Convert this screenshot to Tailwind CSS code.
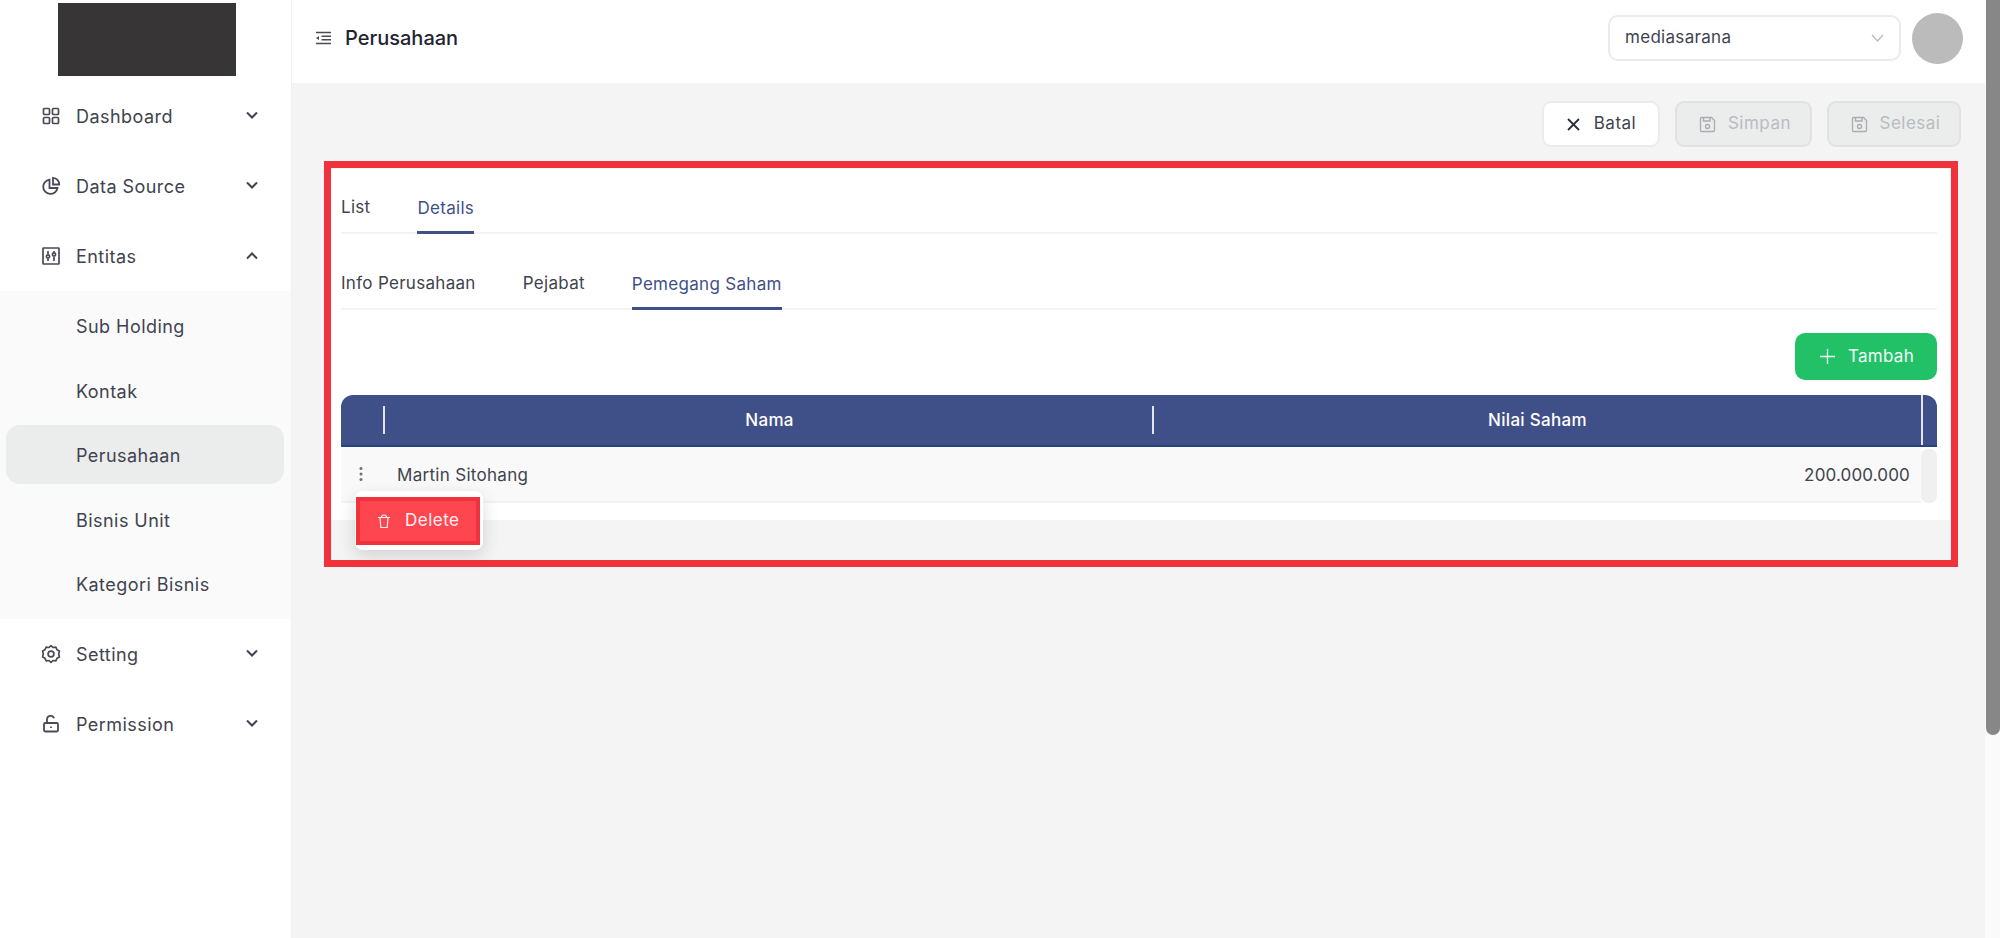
<!DOCTYPE html>
<html lang="id">
<head>
  <meta charset="UTF-8">
  <meta name="viewport" content="width=device-width, initial-scale=1.0">
  <title>Perusahaan</title>
  <script src="https://cdn.jsdelivr.net/npm/@tailwindcss/browser@4"></script>
</head>
<body class="h-[938px] overflow-hidden bg-[#f4f4f4] font-['Inter',sans-serif] text-[#40434e] flex">

  <!-- Sidebar -->
  <aside class="w-[292px] shrink-0 h-full bg-white border-r border-[#f0f0f0]">
    <div class="h-[81px] pt-[3px] pl-[58px]">
      <div class="w-[178px] h-[73px] bg-[#383536]"></div>
    </div>
    <nav class="text-[18px] tracking-[0.45px]">
      <a class="h-[70px] flex items-center pl-[41px] pr-[32px]">
        <svg class="w-[20px] h-[20px] mr-[15px] text-[#4a4a55]" viewBox="0 0 20 20" fill="none" stroke="currentColor" stroke-width="1.7"><rect x="2.500" y="2.500" width="6" height="6" rx="1"/><rect x="11.500" y="2.500" width="6" height="6" rx="1"/><rect x="2.500" y="11.500" width="6" height="6" rx="1"/><rect x="11.500" y="11.500" width="6" height="6" rx="1"/></svg>
        <span class="flex-1">Dashboard</span>
        <svg class="w-[14px] h-[14px] -mt-[3px] text-[#3f4450]" viewBox="0 0 14 14" fill="none" stroke="currentColor" stroke-width="2"><path d="M2 4.500l5 5 5-5"/></svg>
      </a>
      <a class="h-[70px] flex items-center pl-[41px] pr-[32px]">
        <svg class="w-[20px] h-[20px] mr-[15px] text-[#4a4a55]" viewBox="0 0 20 20" fill="none" stroke="currentColor" stroke-width="1.8"><path d="M8.500 3.600a7.200 7.200 0 1 0 8 8.400H8.500z"/><path d="M12 1.800a6.500 6.500 0 0 1 6.200 6.700H12z"/></svg>
        <span class="flex-1">Data Source</span>
        <svg class="w-[14px] h-[14px] -mt-[3px] text-[#3f4450]" viewBox="0 0 14 14" fill="none" stroke="currentColor" stroke-width="2"><path d="M2 4.500l5 5 5-5"/></svg>
      </a>
      <a class="h-[70px] flex items-center pl-[41px] pr-[32px]">
        <svg class="w-[20px] h-[20px] mr-[15px] text-[#4a4a55]" viewBox="0 0 20 20" fill="none" stroke="currentColor" stroke-width="1.7"><rect x="2" y="2" width="16" height="16" rx="0.500"/><path d="M7 5v3M7 13v2M13 5v1M13 11v4"/><circle cx="7" cy="10.500" r="1.600"/><circle cx="13" cy="8.500" r="1.600"/></svg>
        <span class="flex-1">Entitas</span>
        <svg class="w-[14px] h-[14px] text-[#3f4450]" viewBox="0 0 14 14" fill="none" stroke="currentColor" stroke-width="2"><path d="M2 9.500l5-5 5 5"/></svg>
      </a>

      <div class="h-[328px] bg-[#fafafa] pt-[5px] pr-[7px] pl-[6px] flex flex-col gap-[5.5px]">
        <a class="h-[59px] shrink-0 flex items-center pl-[70px] pt-[2px] rounded-[14px]">Sub Holding</a>
        <a class="h-[59px] shrink-0 flex items-center pl-[70px] pt-[2px] rounded-[14px]">Kontak</a>
        <a class="h-[59px] shrink-0 flex items-center pl-[70px] pt-[2px] rounded-[14px] bg-[#ebecec]">Perusahaan</a>
        <a class="h-[59px] shrink-0 flex items-center pl-[70px] pt-[2px] rounded-[14px]">Bisnis Unit</a>
        <a class="h-[59px] shrink-0 flex items-center pl-[70px] pt-[2px] rounded-[14px]">Kategori Bisnis</a>
      </div>

      <a class="h-[70px] flex items-center pl-[41px] pr-[32px]">
        <svg class="w-[20px] h-[20px] mr-[15px] text-[#4a4a55]" viewBox="0 0 20 20" fill="none" stroke="currentColor" stroke-width="1.700" stroke-linejoin="round"><path d="M10 1.600l2 1.900 2.800-.4 1.200 2.600 2.400 1.400-.7 2.900.7 2.900-2.400 1.400-1.200 2.600-2.800-.4-2 1.900-2-1.900-2.800.4L4 14.300 1.600 12.900l.7-2.900-.7-2.900L4 5.700l1.200-2.600 2.800.4z"/><circle cx="10" cy="10" r="2.900"/></svg>
        <span class="flex-1">Setting</span>
        <svg class="w-[14px] h-[14px] -mt-[3px] text-[#3f4450]" viewBox="0 0 14 14" fill="none" stroke="currentColor" stroke-width="2"><path d="M2 4.500l5 5 5-5"/></svg>
      </a>
      <a class="h-[70px] flex items-center pl-[41px] pr-[32px]">
        <svg class="w-[20px] h-[20px] mr-[15px] text-[#4a4a55]" viewBox="0 0 20 20" fill="none" stroke="currentColor" stroke-width="1.800"><rect x="3" y="9" width="14" height="8.500" rx="1.200"/><path d="M6 9V5.500a3.600 3.600 0 0 1 7-1.200"/><path d="M10 12.500v1.500"/></svg>
        <span class="flex-1">Permission</span>
        <svg class="w-[14px] h-[14px] -mt-[3px] text-[#3f4450]" viewBox="0 0 14 14" fill="none" stroke="currentColor" stroke-width="2"><path d="M2 4.500l5 5 5-5"/></svg>
      </a>
    </nav>
  </aside>

  <!-- Main -->
  <div class="flex-1 min-w-0 flex flex-col relative">
    <header class="h-[83px] shrink-0 bg-white flex items-center pl-[23px] pr-[22px] pb-[7px]">
      <svg class="w-[17px] h-[14px] mr-[13px] text-[#4a4a55]" viewBox="0 0 17 14" fill="none" stroke="currentColor" stroke-width="1.400"><path d="M1 1.500h15M6.500 5.200H16M6.500 8.800H16M1 12.500h15"/><path d="M1 7l3-2v4z" fill="currentColor" stroke="none"/></svg>
      <h1 class="text-[20px] font-medium text-[#1f2430] flex-1">Perusahaan</h1>
      <div class="w-[293px] h-[46px] border-2 border-[#ebebeb] rounded-[10px] flex items-center pl-[15px] pr-[15px] text-[17px] tracking-[0.3px] mr-[11px]">
        <span class="flex-1">mediasarana</span>
        <svg class="w-[13px] h-[8px] text-[#b8b8b8]" viewBox="0 0 13 8" fill="none" stroke="currentColor" stroke-width="1.200"><path d="M1 1l5.500 6L12 1"/></svg>
      </div>
      <div class="w-[51px] h-[51px] rounded-full bg-[#bbbbbb]"></div>
    </header>

    <div class="flex justify-end gap-[15px] pt-[18px] pr-[24px] h-[86px] shrink-0 text-[17px] tracking-[0.5px]">
      <button class="w-[118px] h-[46px] bg-white border-2 border-[#ebebeb] rounded-[9px] flex items-center justify-center gap-[14px] pl-[1px]">
        <svg class="w-[13px] h-[13px] text-[#2c2f38]" viewBox="0 0 13 13" fill="none" stroke="currentColor" stroke-width="1.800"><path d="M1 1l11 11M12 1L1 12"/></svg>
        Batal
      </button>
      <button class="w-[137px] h-[46px] bg-[#ebecec] border-2 border-[#e2e2e2] rounded-[9px] flex items-center justify-center gap-[12px] pl-[3px] text-[#b9bcc0]">
        <svg class="w-[17px] h-[17px] text-[#a9abae]" viewBox="0 0 17 17" fill="none" stroke="currentColor" stroke-width="1.300"><path d="M1.500 2.500a1 1 0 0 1 1-1h10l3 3v10a1 1 0 0 1-1 1h-12a1 1 0 0 1-1-1z"/><path d="M4.500 1.500v3.500h6.500V1.500"/><circle cx="8.500" cy="10.500" r="2"/></svg>
        Simpan
      </button>
      <button class="w-[134px] h-[46px] bg-[#ebecec] border-2 border-[#e2e2e2] rounded-[9px] flex items-center justify-center gap-[12px] pl-[3px] text-[#b9bcc0]">
        <svg class="w-[17px] h-[17px] text-[#a9abae]" viewBox="0 0 17 17" fill="none" stroke="currentColor" stroke-width="1.300"><path d="M1.500 2.500a1 1 0 0 1 1-1h10l3 3v10a1 1 0 0 1-1 1h-12a1 1 0 0 1-1-1z"/><path d="M4.500 1.500v3.500h6.500V1.500"/><circle cx="8.500" cy="10.500" r="2"/></svg>
        Selesai
      </button>
    </div>

    <!-- Card -->
    <section class="ml-[39px] mr-[35px] bg-white pl-[10px] pr-[13px] pb-[17px] relative text-[17px] tracking-[0.3px]">
      <div class="h-[65px] border-b-2 border-[#f3f3f3] flex items-end gap-[47px] leading-[20px]">
        <a class="pb-[15px]">List</a>
        <a class="pb-[13px] -mb-[2px] border-b-[3px] border-[#3f5089] text-[#3f5089]">Details</a>
      </div>
      <div class="h-[76px] border-b-2 border-[#f3f3f3] flex items-end gap-[47px] leading-[20px]">
        <a class="pb-[15px]">Info Perusahaan</a>
        <a class="pb-[15px]">Pejabat</a>
        <a class="pb-[13px] -mb-[2px] border-b-[3px] border-[#3f5089] text-[#3f5089]">Pemegang Saham</a>
      </div>
      <div class="flex justify-end mt-[23px]">
        <button class="w-[142px] h-[47px] bg-[#22c168] text-[#f2fff8] rounded-[10px] flex items-center justify-center gap-[13px] pl-[2px]">
          <svg class="w-[15px] h-[15px]" viewBox="0 0 15 15" fill="none" stroke="currentColor" stroke-width="1.300"><path d="M7.500 0v15M0 7.500h15"/></svg>
          Tambah
        </button>
      </div>

      <!-- Table -->
      <div class="mt-[15px]">
        <div class="h-[52px] bg-[#3f5089] rounded-t-[12px] border-b-2 border-[#27427f] grid grid-cols-[44px_769px_769px_14px] items-center text-white font-medium">
          <div class="h-[28px] border-r-2 border-white/85"></div>
          <div class="h-[28px] border-r-2 border-white/85 flex items-center justify-center pt-[2px] pl-[2px]">Nama</div>
          <div class="h-full border-r-2 border-white/85 flex items-center justify-center pt-[2px]">Nilai Saham</div>
          <div></div>
        </div>
        <div class="h-[56px] grid grid-cols-[43px_1fr_16px]">
          <div class="bg-[#f9f9f9] border-b-2 border-[#f3f3f3] flex items-center justify-center">
            <svg class="w-[4px] h-[16px] -ml-[3px] text-[#6f7178]" viewBox="0 0 4 16" fill="currentColor"><circle cx="2" cy="2.500" r="1.500"/><circle cx="2" cy="8" r="1.500"/><circle cx="2" cy="13.500" r="1.500"/></svg>
          </div>
          <div class="bg-[#f9f9f9] border-b-2 border-[#f3f3f3] flex items-center justify-between pt-[3px] pl-[13px] pr-[10px]">
            <span>Martin Sitohang</span>
            <span class="pr-[1px] tracking-[0.15px]">200.000.000</span>
          </div>
          <div class="bg-[#f0f0f0] rounded-[7px] mt-[2px]"></div>
        </div>
      </div>

      <!-- Action menu -->
      <div class="absolute left-[24px] top-[322px] w-[128px] h-[59px] bg-white rounded-[8px] shadow-[0_6px_18px_rgba(0,0,0,0.14)] flex items-center tracking-[0.5px]">
        <button class="ml-[1px] w-[124px] h-[48px] bg-[#fd4650] text-[#fff0f0] border-[4px] border-[#ef323b] flex items-center gap-[14px] pl-[17px] pt-[1px]">
          <svg class="w-[14px] h-[15px]" viewBox="0 0 14 15" fill="none" stroke="currentColor" stroke-width="1.200"><path d="M1 3.500h12M3 3.500l.8 10h6.400l.8-10M4.500 3.500A2.500 2.500 0 0 1 9.500 3.500"/></svg>
          Delete
        </button>
      </div>
    </section>

    <!-- Annotation frame -->
    <div class="absolute left-[32px] top-[161px] w-[1634px] h-[406px] border-[7px] border-[#ef323b] pointer-events-none"></div>
  </div>

  <!-- Page scrollbar -->
  <div class="w-[15px] shrink-0 h-full bg-[#fafafa] flex flex-col">
    <div class="h-[735px] ml-[1px] bg-[#878787] rounded-b-[7px]"></div>
  </div>
</body>
</html>
